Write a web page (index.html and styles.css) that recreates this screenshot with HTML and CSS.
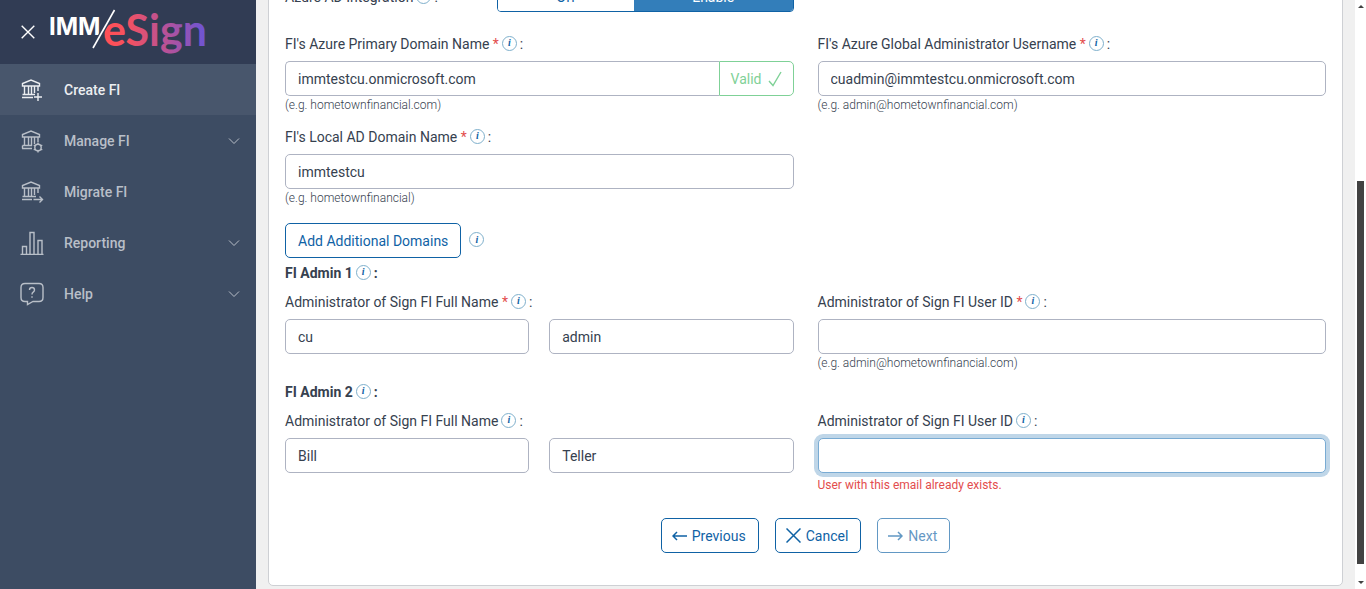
FILE: index.html
```
<!DOCTYPE html>
<html lang="en">
<head>
  <meta charset="UTF-8">
  <meta name="viewport" content="width=device-width, initial-scale=1.0">
  <title>IMM eSign - Create FI</title>
  <link rel="stylesheet" href="styles.css">
</head>
<body>
  <svg class="sprite" aria-hidden="true">
    <symbol id="bank" viewBox="0 0 24 24">
      <path d="M2.5 8V5.5L11 2l8.500 3.500V8zM4.500 8v9M8.500 8v9M11.500 8v9M14.500 8v7M18 8v5"/>
    </symbol>
    <symbol id="chevron" viewBox="0 0 12 8">
      <path d="M1 1.500l5 5 5-5"/>
    </symbol>
  </svg>
  <div class="app">
    <aside class="sidebar">
      <div class="brand">
        <button type="button" class="close" aria-label="Close menu">
          <svg width="14" height="14" viewBox="0 0 14 14"><path d="M.7.7l12.600 12.600M13.300.7L.7 13.300"/></svg>
        </button>
        <svg class="logo" width="160" height="60" viewBox="0 0 160 60" role="img" aria-label="IMM eSign">
          <defs>
            <linearGradient id="brandFade" gradientUnits="userSpaceOnUse" x1="58" y1="38" x2="156" y2="28">
              <stop offset="0" stop-color="#ff5057"/>
              <stop offset="0.2" stop-color="#f5515f"/>
              <stop offset="0.6" stop-color="#b5529a"/>
              <stop offset="1" stop-color="#6a55d6"/>
            </linearGradient>
          </defs>
          <text class="logo-imm" x="-1" y="33">IMM</text>
          <text class="logo-esign" x="53" y="44" fill="url(#brandFade)">eSign</text>
          <path class="logo-cut" d="M64.500 8L43 46"/>
          <path class="logo-slash" d="M64.500 8L43 46"/>
        </svg>
      </div>
      <nav class="menu">
        <a href="#" class="menu-item active">
          <svg class="icon" viewBox="0 0 24 24"><use href="#bank"/><path d="M2.500 16.500H15M2 19.500h11M18 15v8M14 19h8"/></svg>
          <span>Create FI</span>
        </a>
        <a href="#" class="menu-item">
          <svg class="icon" viewBox="0 0 24 24"><use href="#bank"/><path d="M2.500 16.500H12M2 19.500h10M2.500 16.500v3"/><circle cx="18" cy="18.500" r="3.200"/><path d="M18 13.500v2M18 21.500v2M13.700 16l1.700 1M20.600 20l1.700 1M13.700 21l1.700-1M20.600 17l1.700-1"/></svg>
          <span>Manage FI</span>
          <svg class="chevron"><use href="#chevron"/></svg>
        </a>
        <a href="#" class="menu-item">
          <svg class="icon" viewBox="0 0 24 24"><use href="#bank"/><path d="M2.500 16.500H16M2 19.500h10M13.500 19.500h9M19.500 16.500l3 3-3 3"/></svg>
          <span>Migrate FI</span>
        </a>
        <a href="#" class="menu-item">
          <svg class="icon" viewBox="0 0 24 24"><path d="M.5 23.500h23M2.500 23.500v-8h4v8M10 23.500V1.500h4v22M18 23.500V9.500h4v14"/></svg>
          <span>Reporting</span>
          <svg class="chevron"><use href="#chevron"/></svg>
        </a>
        <a href="#" class="menu-item">
          <svg class="icon" viewBox="0 0 24 24"><path d="M5 1.500h14q4 0 4 4v10q0 4-4 4h-6l-5.500 3v-3H5q-4 0-4-4v-10q0-4 4-4z"/><path d="M9.500 8q0-2.500 2.500-2.500T14.500 8q0 1.300-1.300 2.100T12 12.500M12 14.300v1.500"/></svg>
          <span>Help</span>
          <svg class="chevron"><use href="#chevron"/></svg>
        </a>
      </nav>
    </aside>

    <main class="content">
      <form class="card">
        <div class="row integration">
          <div class="toggle-field">
            <div class="label">Azure AD Integration<button type="button" class="info" aria-label="Info">i</button>:</div>
            <div class="toggle">
              <button type="button">Off</button>
              <button type="button" class="on">Enable</button>
            </div>
          </div>
        </div>

        <div class="row">
          <div class="field">
            <div class="label"><label for="azureDomain">FI's Azure Primary Domain Name <span class="req">*</span></label><button type="button" class="info" aria-label="Info">i</button>:</div>
            <div class="input-group">
              <input type="text" id="azureDomain" value="immtestcu.onmicrosoft.com">
              <button type="button" class="valid">Valid
                <svg width="14" height="16" viewBox="0 0 14 16"><path d="M1 10l4 4.500L13 1"/></svg>
              </button>
            </div>
            <div class="hint">(e.g. hometownfinancial.com)</div>
          </div>
          <div class="field">
            <div class="label"><label for="azureAdmin">FI's Azure Global Administrator Username <span class="req">*</span></label><button type="button" class="info" aria-label="Info">i</button>:</div>
            <input type="text" id="azureAdmin" value="cuadmin@immtestcu.onmicrosoft.com">
            <div class="hint">(e.g. admin@hometownfinancial.com)</div>
          </div>
        </div>

        <div class="row">
          <div class="field">
            <div class="label"><label for="localDomain">FI's Local AD Domain Name <span class="req">*</span></label><button type="button" class="info" aria-label="Info">i</button>:</div>
            <input type="text" id="localDomain" value="immtestcu">
            <div class="hint">(e.g. hometownfinancial)</div>
          </div>
        </div>

        <div class="domains">
          <button type="button" class="btn">Add Additional Domains</button>
          <button type="button" class="info" aria-label="Info">i</button>
        </div>

        <h2 class="label heading">FI Admin 1<button type="button" class="info" aria-label="Info">i</button>:</h2>
        <div class="row admin">
          <div class="field">
            <div class="label"><label for="first1">Administrator of Sign FI Full Name <span class="req">*</span></label><button type="button" class="info" aria-label="Info">i</button>:</div>
            <div class="names">
              <input type="text" id="first1" value="cu">
              <input type="text" aria-label="Last name" value="admin">
            </div>
          </div>
          <div class="field">
            <div class="label"><label for="userId1">Administrator of Sign FI User ID <span class="req">*</span></label><button type="button" class="info" aria-label="Info">i</button>:</div>
            <input type="text" id="userId1">
            <div class="hint">(e.g. admin@hometownfinancial.com)</div>
          </div>
        </div>

        <h2 class="label heading">FI Admin 2<button type="button" class="info" aria-label="Info">i</button>:</h2>
        <div class="row admin">
          <div class="field">
            <div class="label"><label for="first2">Administrator of Sign FI Full Name</label><button type="button" class="info" aria-label="Info">i</button>:</div>
            <div class="names">
              <input type="text" id="first2" value="Bill">
              <input type="text" aria-label="Last name" value="Teller">
            </div>
          </div>
          <div class="field">
            <div class="label"><label for="userId2">Administrator of Sign FI User ID</label><button type="button" class="info" aria-label="Info">i</button>:</div>
            <input type="text" id="userId2" class="focused">
            <div class="hint error">User with this email already exists.</div>
          </div>
        </div>

        <div class="actions">
          <button type="button" class="btn">
            <svg width="15" height="10" viewBox="0 0 15 10"><path class="bold" d="M15 5H1M5 1L1 5l4 4"/></svg>
            Previous
          </button>
          <button type="button" class="btn">
            <svg width="15" height="15" viewBox="0 0 15 15"><path class="bold" d="M.5.5l14 14M14.500.5l-14 14"/></svg>
            Cancel
          </button>
          <button type="button" class="btn" disabled>
            <svg width="15" height="10" viewBox="0 0 15 10"><path class="bold" d="M0 5h14M10 1l4 4-4 4"/></svg>
            Next
          </button>
        </div>
      </form>
    </main>

    <div class="scrollbar" aria-hidden="true">
      <span class="arrow up"></span>
      <div class="track"><div class="thumb"></div></div>
      <span class="arrow down"></span>
    </div>
  </div>
</body>
</html>
```
FILE: styles.css
```
*{
  box-sizing : border-box;
}
body{
  margin : 0;
  font-family : Roboto, "Liberation Sans", sans-serif;
  font-size : 14px;
  line-height : 20px;
  color : #36414f;
}
button,input{
  font : inherit;
  color : inherit;
}
button{
  cursor : pointer;
}
svg{
  fill : none;
  stroke : currentColor;
}
.sprite{
  position : absolute;
  width : 0;
  height : 0;
}
.app{
  display : flex;
  height : 100vh;
  overflow : hidden;
  background : #f0f0f0;
}

/* sidebar */
.sidebar{
  flex : 0 0 256px;
  background : #3d4c63;
  color : #b9bfc8;
}
.brand{
  display : flex;
  align-items : center;
  gap : 15px;
  height : 64px;
  padding-left : 21px;
  background : #313c54;
}
.close{
  display : flex;
  padding : 0;
  border : 0;
  background : none;
  color : #fff;
}
.close svg{
  stroke-width : 1.4;
}
.logo text{
  stroke : none;
}
.logo-imm{
  font : 700 24px Inter, sans-serif;
  fill : #fff;
}
.logo-esign{
  font : 700 43px Lato, sans-serif;
}
.logo-cut{
  stroke : #313c54;
  stroke-width : 4;
}
.logo-slash{
  stroke : #fff;
  stroke-width : 1.6;
}
.menu-item{
  display : flex;
  align-items : center;
  height : 51px;
  padding : 0 16px 0 20px;
  color : inherit;
  font-weight : 500;
  text-decoration : none;
}
.menu-item.active{
  background : #48566c;
  color : #eceef1;
}
.menu-item span{
  flex : 1;
}
.icon{
  width : 24px;
  height : 24px;
  margin-right : 20px;
  stroke-width : 1.4;
}
.chevron{
  width : 12px;
  height : 8px;
}

/* form, kept scrolled to its end */
.content{
  flex : 1;
  min-width : 0;
  display : flex;
  flex-direction : column;
  justify-content : flex-end;
  padding : 0 12px 3px;
}
.card{
  flex : none;
  padding : 16px 16px 32px;
  border : 1px solid #ced0d4;
  border-radius : 5px;
  background : #fff;
}
.row{
  display : grid;
  grid-template-columns : 1fr 1fr;
  gap : 24px;
  margin-bottom : 13px;
}
.row.admin{
  margin-bottom : 10px;
}
.integration{
  margin-bottom : 22px;
}
.toggle-field{
  display : grid;
  grid-template-columns : 5fr 7fr;
  align-items : center;
}
.toggle{
  display : flex;
  height : 30px;
  border : 1px solid #0f62a5;
  border-radius : 4px;
  color : #0f62a5;
  overflow : hidden;
}
.toggle button{
  flex : 6;
  padding : 0;
  border : 0;
  background : #fff;
}
.toggle .on{
  flex : 7;
  background : #337eba;
  color : #fff;
}
.label{
  display : flex;
  align-items : center;
  height : 20px;
  margin-bottom : 7px;
}
.toggle-field .label{
  margin : 0;
}
.req{
  color : #e34d4d;
}
.info{
  flex : none;
  width : 15px;
  height : 15px;
  margin : 0 3px 2px;
  padding : 0;
  border : 1px solid #7fb0cc;
  border-radius : 50%;
  background : #fff;
  color : #0f62a5;
  font : italic 700 10px/12px "Liberation Serif", serif;
  text-align : center;
}
input{
  display : block;
  width : 100%;
  min-width : 0;
  height : 35px;
  padding : 0 12px;
  border : 1px solid #aeb3c2;
  border-radius : 5px;
  background : #fff;
  outline : 0;
}
input.focused{
  border-color : #79abd3;
  box-shadow : 0 0 0 4px #bfd6e8;
}
.input-group{
  display : flex;
}
.input-group input{
  flex : 1;
  border-right : 0;
  border-radius : 5px 0 0 5px;
}
.valid{
  display : flex;
  align-items : center;
  gap : 6px;
  height : 35px;
  padding : 0 11px;
  border : 1px solid #7fd197;
  border-radius : 0 5px 5px 0;
  background : #fff;
  color : #7fd197;
}
.valid svg{
  stroke-width : 1.4;
}
.names{
  display : grid;
  grid-template-columns : 1fr 1fr;
  gap : 20px;
}
.hint{
  font-size : 12px;
  line-height : 18px;
  font-weight : 300;
}
.hint.error{
  padding-top : 3px;
  color : #e34d4d;
  font-weight : 400;
}
.domains{
  display : flex;
  align-items : center;
  gap : 5px;
  margin : 16px 0 5px;
}
.heading{
  margin : 0 0 9px;
  font-size : 14px;
  font-weight : 700;
}
.btn{
  display : flex;
  align-items : center;
  gap : 5px;
  height : 35px;
  padding : 0 12px;
  border : 1px solid #0f62a5;
  border-radius : 5px;
  background : #fff;
  color : #0f62a5;
}
.btn:disabled{
  opacity : 0.65;
}
.btn .bold{
  stroke-width : 1.5;
}
.actions{
  display : flex;
  justify-content : center;
  gap : 16px;
  margin-top : 24px;
}
.actions .btn{
  padding-left : 10px;
}

/* page scrollbar */
.scrollbar{
  flex : 0 0 11px;
  display : flex;
  flex-direction : column;
  align-items : center;
  padding : 5px 0;
  background : #fff;
}
.track{
  flex : 1;
  display : flex;
  align-items : flex-end;
  margin : 17px 0;
}
.thumb{
  width : 7px;
  height : 71%;
  background : #424242;
}
.arrow{
  border : 3px solid transparent;
}
.up{
  border-top : 0;
  border-bottom-color : #424242;
}
.down{
  border-bottom : 0;
  border-top-color : #424242;
}
```
